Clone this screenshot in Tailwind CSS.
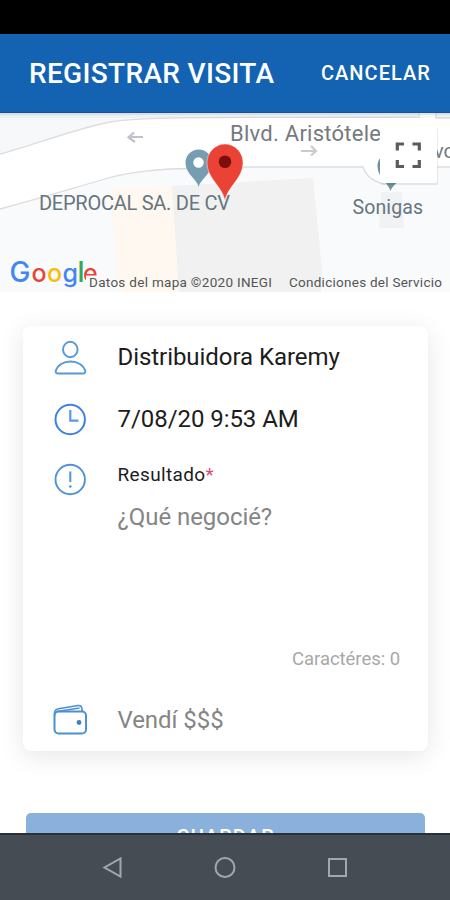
<!DOCTYPE html>
<html lang="es">

<head>
    <meta charset="UTF-8" />
    <meta name="viewport" content="width=device-width, initial-scale=1.0" />
    <title>Registrar visita</title>
    <script src="https://cdn.jsdelivr.net/npm/@tailwindcss/browser@4"></script>
</head>

<body class="h-screen bg-white flex flex-col overflow-hidden font-['Roboto',sans-serif]">
    <!-- Status bar -->
    <div class="h-[34px] shrink-0 bg-black"></div>

    <header class="h-[79px] shrink-0 bg-[#1363b2] flex items-center justify-between pl-[29px] pr-[19px] text-white border-b border-[#0d55a0]">
        <h1 class="pt-0.5 text-[28px] leading-8 font-medium tracking-[0.33px] whitespace-nowrap">REGISTRAR VISITA</h1>
        <button class="text-[20px] leading-6 font-medium tracking-[1.05px]">CANCELAR</button>
    </header>

    <!-- Map -->
    <svg class="block w-full h-[179px] shrink-0" viewBox="0 113 450 179">
        <rect x="0" y="113" width="450" height="179" fill="#f9fafc" />
        <path d="M0 113H450V119H330C240 118 160 116 125 121C80 128 35 144 0 154Z" fill="#f7f8fa" />
        <path d="M110 188L172 186L179 276V292H119Z" fill="#fef8f0" />
        <path d="M172 186L313 178L322 270L321 292H179Z" fill="#f1f1f2" />
        <path d="M381 192H402L404 228H379Z" fill="#f1f2f3" />
        <path d="M0 154C40 143 75 129 110 122C140 116 240 118 419 117V113H436V118H450V167H363H225C155 168 128 172 105 179C70 189 35 200 0 209Z" fill="#fff" />
        <path d="M363 167C366 175 372 182 385 184V160H363Z" fill="#fff" />
        <path d="M0 154C40 143 75 129 110 122C140 116 240 118 419 117V113M436 113V118H450M0 209C35 200 70 189 105 179C128 172 155 168 225 168M235 167H363C366 175 372 182 385 184M437 167H450" fill="none" stroke="#dcdde0" stroke-width="1.3" />
        <rect x="0" y="113" width="450" height="2" fill="#000" opacity=".1" />
        <rect x="0" y="115" width="450" height="3" fill="#000" opacity=".03" />
        <g fill="none" stroke="#bfc1cc" stroke-width="2.2">
            <path d="M143 137H129M134 132.500L128.500 137.500L135 142" />
            <path d="M301 151H315M311 146L316 151L311 155.500" stroke="#c9cbce" />
        </g>
        <path d="M390.500 191C389 184 377 177 377.500 165C378 160 380 158 383 155H404V174C402 180 392 185 390.500 191Z" fill="#6f929c" />

        <g fill="#66757e" font-family="Roboto, sans-serif">
            <text x="230" y="141" font-size="22" textLength="151" fill="#757a7f">Blvd. Aristótele</text>
            <text x="434" y="158" font-size="20" fill="#757a7f">vo</text>
            <text x="39" y="210" font-size="20" textLength="191">DEPROCAL SA. DE CV</text>
            <text x="352.500" y="214" font-size="19.500" textLength="70.500">Sonigas</text>
        </g>

        <!-- Place pin -->
        <path d="M198.700 187C197 179 185.500 174 185.500 162.500A13.200 13 0 0 1 211.900 162.500C211.900 174 200.400 179 198.700 187Z" fill="#779db2" />
        <circle cx="198.500" cy="162.500" r="5.200" fill="#fff" />
        <!-- Visit marker -->
        <path d="M225 201C222.500 186 207 179 207 162.500A18 18.500 0 0 1 243 162.500C243 179 227.500 186 225 201Z" fill="#ea4335" stroke="#fff" stroke-opacity=".45" stroke-width="1" />
        <circle cx="225" cy="161.700" r="6.300" fill="#7c0f0b" />

        <!-- Fullscreen control -->
        <rect x="380" y="128" width="58" height="57" rx="2" fill="#000" opacity=".08" />
        <rect x="380" y="126" width="57" height="57" rx="2" fill="#fff" />
        <path d="M397.300 150.500V144H404M412.500 144H419.300V150.500M419.300 160V166.500H412.500M404 166.500H397.300V160" fill="none" stroke="#5c5c5c" stroke-width="3.200" />

        <!-- Logo, cut by the attribution strip -->
        <clipPath id="logoClip"><path d="M0 250H98V275.500H86V292H0Z" /></clipPath>
        <g clip-path="url(#logoClip)">
            <text y="281.500" font-family="Inter, sans-serif" font-size="25" font-weight="500">
                <tspan x="9.500" font-size="28" fill="#4285f4">G</tspan><tspan x="31.500" fill="#ea4335">o</tspan><tspan x="47" fill="#fbbc05">o</tspan><tspan x="62.500" fill="#4285f4">g</tspan><tspan x="77.500" font-size="28" fill="#34a853">l</tspan><tspan x="83" fill="#ea4335">e</tspan>
            </text>
        </g>
        <g fill="#555" font-family="Roboto, sans-serif" font-size="13.500">
            <text x="89" y="287" textLength="183">Datos del mapa ©2020 INEGI</text>
            <text x="289" y="287" textLength="153">Condiciones del Servicio</text>
        </g>
    </svg>

    <main class="flex-1 min-h-0 overflow-hidden flex flex-col pt-[34px]">
        <section class="ml-[23px] w-[405px] h-[425px] shrink-0 rounded-lg bg-white shadow-[0_5px_26px_rgba(0,0,0,0.1)] pl-[30px] pr-7 text-[24px] leading-7 tracking-[-0.06px] text-[#1c1c1c]">
            <div class="flex items-center pt-3.5 h-[48px]">
                <svg class="w-[35px] h-[36px] mr-[29.5px] shrink-0" viewBox="0 0 35 36" fill="none" stroke="#5599d8" stroke-width="1.900">
                    <ellipse cx="17.300" cy="10.500" rx="7.300" ry="7.700" />
                    <path d="M4.500 34.500H30.500C32 34.500 32.500 33.500 32.200 32C30.500 26 24.500 22.500 17.500 22.500S4.500 26 2.800 32C2.500 33.500 3 34.500 4.500 34.500Z" />
                </svg>
                <p>Distribuidora Karemy</p>
            </div>

            <div class="flex items-center mt-[28px] h-[34px]">
                <svg class="w-[35px] h-[34px] mr-[29.5px] shrink-0" viewBox="0 0 35 34" fill="none" stroke="#3f80e3" stroke-width="2">
                    <circle cx="17.200" cy="17.500" r="14.700" />
                    <path d="M17.300 8V18.700H25.500" stroke="#5c97e8" stroke-width="2.200" />
                </svg>
                <p>7/08/20 9:53 AM</p>
            </div>

            <div class="flex mt-[26px] h-[206px]">
                <svg class="w-[35px] h-[34px] mr-[29.5px] shrink-0" viewBox="0 0 35 34" fill="none" stroke="#4f93d5" stroke-width="1.900">
                    <circle cx="17.200" cy="17.500" r="14.700" />
                    <path d="M17.300 9.500V20" stroke-width="2" />
                    <circle cx="17.300" cy="24.500" r="1.300" fill="#4f93d5" stroke="none" />
                </svg>
                <div class="flex-1 flex flex-col">
                    <label class="mt-px text-[19px] leading-6 tracking-[0.35px]">Resultado<span class="text-[#e0486e]">*</span></label>
                    <p class="mt-4 text-[#858585]">¿Qué negocié?</p>
                    <p class="mt-auto -mb-[3px] text-right text-[18.5px] leading-6 tracking-[-0.05px] text-[#a8a8a8]">Caractéres: 0</p>
                </div>
            </div>

            <div class="flex items-center mt-[35px] h-[34px]">
                <svg class="w-[35px] h-[34px] mr-[29.5px] shrink-0" viewBox="0 0 35 34" fill="none" stroke="#4a90d3" stroke-width="2">
                    <rect x="1.500" y="8.500" width="31.500" height="22" rx="4" />
                    <path d="M1.500 13V10C1.500 7.500 3 6.300 5.500 5.800L25 2.500C27.500 2.200 28.500 3.500 28.700 5L29.300 8.500M4 8.500L26.500 5" stroke-width="1.600" />
                    <circle cx="26" cy="19.500" r="2.400" fill="#3f80bd" stroke="none" />
                </svg>
                <p class="text-[#858585]">Vendí $$$</p>
            </div>
        </section>

        <button class="mt-[62px] ml-[26px] w-[399px] h-[52px] shrink-0 rounded-[5px] bg-[#8ab0dc] text-white text-[20px] leading-6 font-medium tracking-[1.1px] flex justify-center pt-3">GUARDAR</button>
    </main>

    <!-- Android navigation -->
    <nav class="h-[67px] shrink-0 bg-[#454c53] border-t-2 border-[#2a3037] flex items-center justify-center">
        <svg class="w-[260px] h-[26px]" viewBox="0 0 260 26" fill="none" stroke="#a3a7ab" stroke-width="2">
            <path d="M25.500 3.500V21.500L9.500 12.500Z" />
            <circle cx="130" cy="12.500" r="9.500" />
            <rect x="234" y="4" width="17" height="17" />
        </svg>
    </nav>
</body>

</html>
